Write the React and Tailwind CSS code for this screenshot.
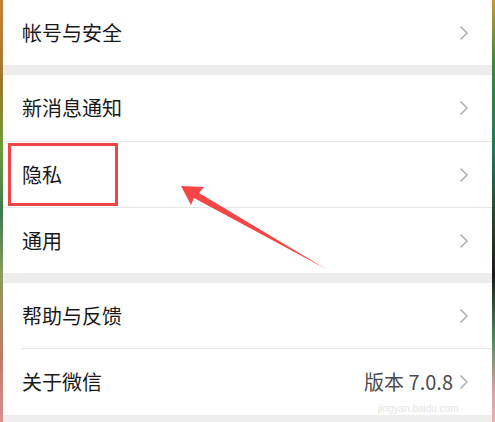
import React from "react";

const Chevron = () => (
  <svg width="10" height="16" viewBox="0 0 10 16" className="shrink-0">
    <path d="M1.5 1.5 L8 8 L1.5 14.5" fill="none" stroke="#b2b2b2" strokeWidth="1.6" />
  </svg>
);

const Row = ({ label, h, right, border }) => (
  <div
    className={`flex items-center justify-between bg-white pl-[19px] pr-[23px] ${h} ${border || ""}`}
  >
    <span className="text-[20px] leading-none text-[#191919]">{label}</span>
    <div className="flex items-center gap-[6px]">
      {right && <span className="text-[20px] leading-none text-[#4c4c4c]">{right}</span>}
      <Chevron />
    </div>
  </div>
);

export default function App() {
  return (
    <div
      className="relative flex h-[422px] w-[495px] overflow-hidden"
      style={{ fontFamily: '"Noto Sans CJK SC", "Noto Sans", sans-serif' }}
    >
      <div className="w-[3px] shrink-0 bg-[linear-gradient(to_bottom,#c8803a_0%,#9a7a30_20%,#6f9a3a_35%,#3f7a50_50%,#8a9a60_65%,#c07a6a_85%,#d89090_100%)]" />
      <div className="flex w-[489px] flex-col bg-[#ededed]">
        <Row label="帐号与安全" h="h-[65px]" />
        <div className="h-[10px]" />
        <Row label="新消息通知" h="h-[67px]" border="border-b border-[#e6e6e6]" />
        <Row label="隐私" h="h-[66px]" border="border-b border-[#e6e6e6]" />
        <Row label="通用" h="h-[65px]" />
        <div className="h-[10px]" />
        <div className="bg-white">
          <div className="ml-[18px] flex h-[66px] items-center justify-between border-b border-[#e6e6e6] pl-[1px] pr-[23px]">
            <span className="text-[20px] leading-none text-[#191919]">帮助与反馈</span>
            <Chevron />
          </div>
        </div>
        <Row label="关于微信" h="h-[66px]" right="版本 7.0.8" />
      </div>
      <div className="w-[3px] shrink-0 bg-[linear-gradient(to_bottom,#c89a2a_0%,#3a8a3a_15%,#1f7a5a_35%,#2a3a2a_55%,#1a1a1a_65%,#4a8a5a_80%,#d8a0a0_92%,#e8b0b0_100%)]" />

      <div className="absolute left-[8px] top-[143px] h-[63px] w-[110px] border-[3px] border-[#f04446]" />

      <svg className="absolute left-0 top-0" width="495" height="422" viewBox="0 0 495 422">
        <polygon points="181,186 204,187 199,193 326,269 194,198 191,205" fill="#f54545" />
      </svg>

      <div className="pointer-events-none absolute left-[378px] top-[397px] leading-none text-[#e4e4e4]">
        <span className="text-[10px]" style={{ fontFamily: '"Liberation Sans", sans-serif' }}>jingyan.baidu.com</span>
      </div>
    </div>
  );
}
